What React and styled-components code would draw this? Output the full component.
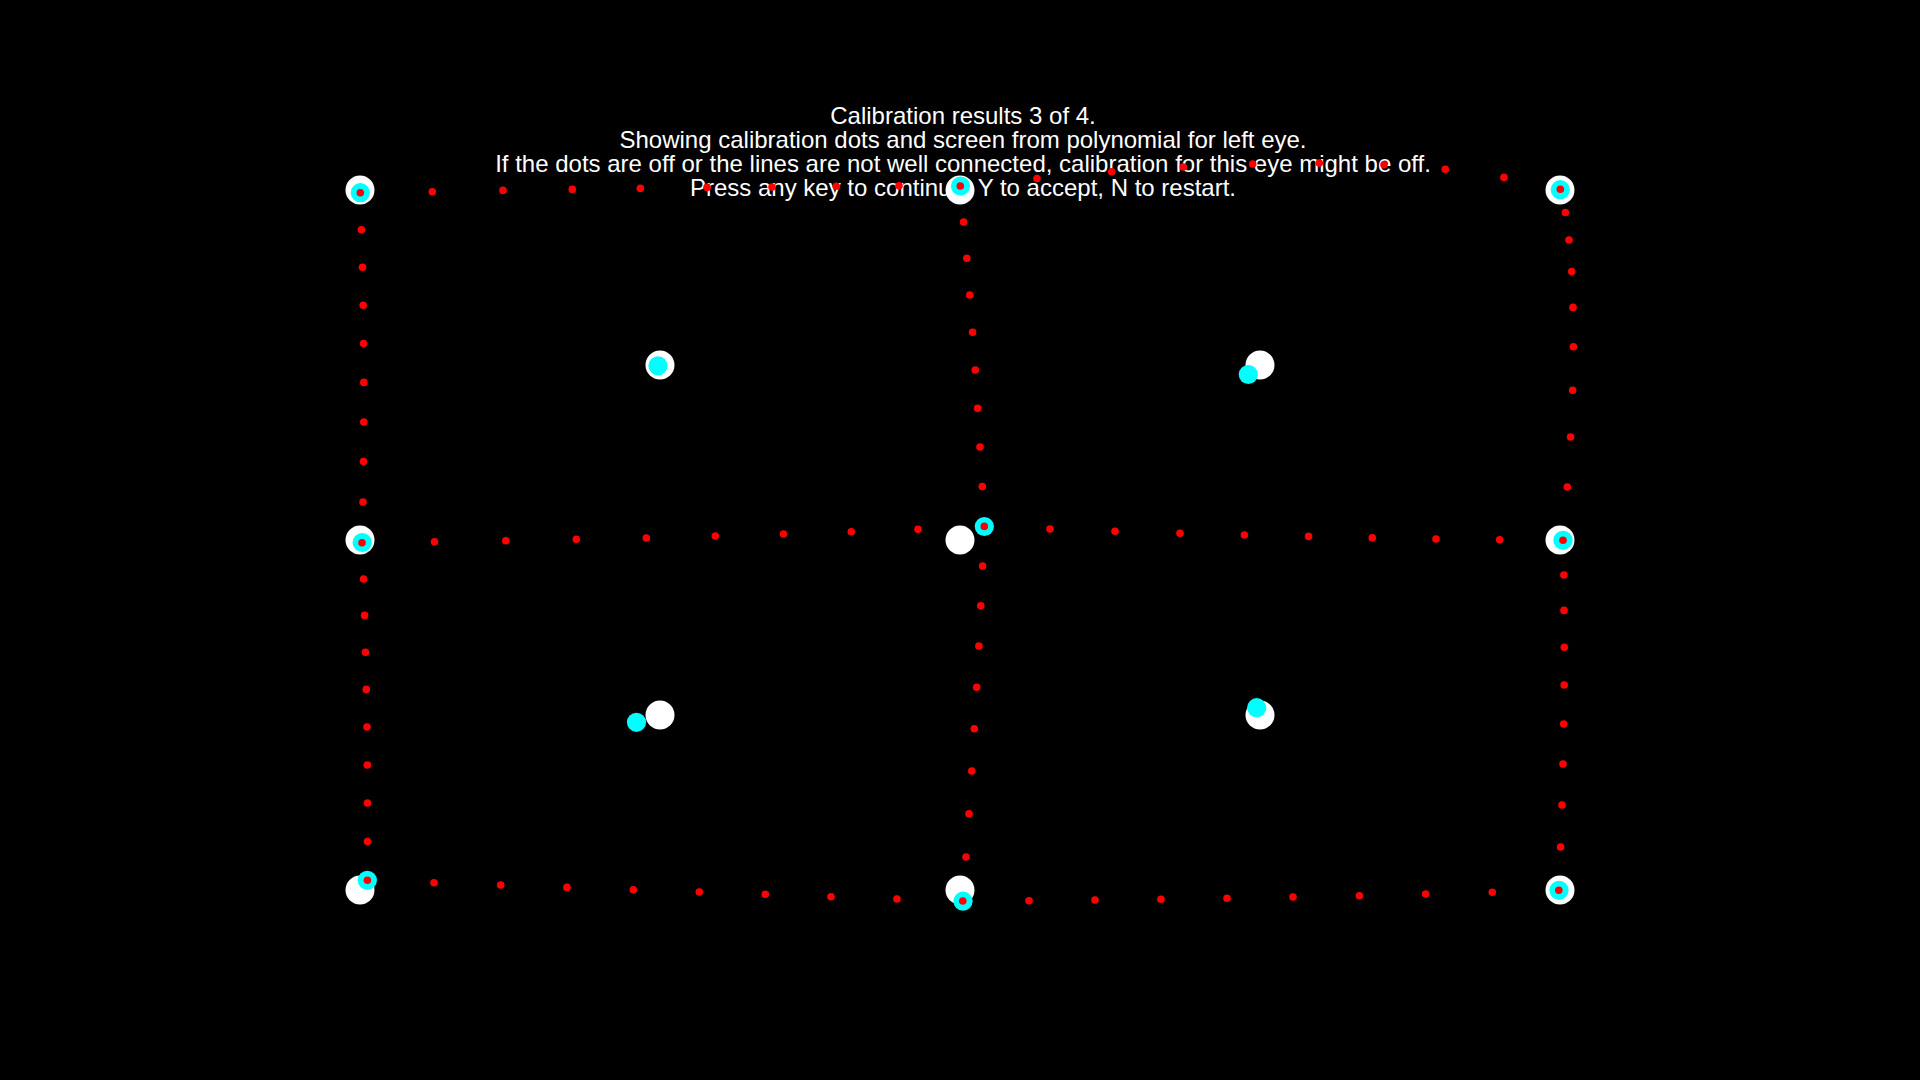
import React from "react";
import styled, { createGlobalStyle } from "styled-components";

const GlobalStyle = createGlobalStyle`
  body {
    margin: 0;
    background: #000;
  }
`;

const Screen = styled.main`
  display: grid;
  min-height: 100vh;
  background: #000;
  overflow: hidden;
`;

const Message = styled.div`
  grid-area: 1 / 1;
  padding: 104px 0 0 6px;
  color: #fff;
  font-family: "Liberation Sans", Arial, sans-serif;
  font-size: 24px;
  line-height: 24px;
  text-align: center;
`;

const Line = styled.p`
  margin: 0;
`;

const Plot = styled.svg`
  grid-area: 1 / 1;
  display: block;
  width: 100%;
  height: 100vh;
`;

const Target = styled.circle`
  fill: #fff;
`;

const Gaze = styled.circle`
  fill: #0ff;
`;

const Sample = styled.circle`
  fill: #f00;
`;

const lines = [
  "Calibration results 3 of 4.",
  "Showing calibration dots and screen from polynomial for left eye.",
  "If the dots are off or the lines are not well connected, calibration for this eye might be off.",
  "Press any key to continue, Y to accept, N to restart.",
];

const targets = [
  [360, 190], [960, 190], [1560, 190],
  [660, 365], [1260, 365],
  [360, 540], [960, 540], [1560, 540],
  [660, 715], [1260, 715],
  [360, 890], [960, 890], [1560, 890],
];

const gazes = [
  [360.3, 192.7], [960.5, 186], [1560.3, 189.7],
  [658, 365.8], [1248.3, 374.5],
  [362.2, 542.5], [984.3, 526.5], [1563, 540.3],
  [636.5, 722.3], [1256.7, 707.7],
  [367.3, 880.3], [963, 901.2], [1559, 890.3],
];

// Polynomial samples between neighbouring targets, one list per grid line.
const paths = {
  top: [
    [360.3, 192.7], [432.3, 191.7], [503, 190.4], [572.3, 189.4], [640.3, 188.4],
    [707, 187.4], [772, 187], [836.3, 186.3], [899, 185.8], [960.3, 186],
    [1037, 178.5], [1111.7, 171.7], [1183.3, 167], [1252.7, 164], [1319.3, 163],
    [1384, 164.8], [1445.3, 169.3], [1504, 177.4], [1560.3, 189.3],
  ],
  middle: [
    [362, 542.7], [434.5, 541.7], [505.8, 540.7], [576.3, 539.3], [646.3, 538],
    [715.3, 536], [783.5, 534], [851.3, 531.7], [918, 529.3], [984.3, 526.4],
    [1050, 529], [1115, 531.3], [1180, 533.3], [1244.4, 535], [1308.6, 536.4],
    [1372.3, 537.8], [1436, 539], [1499.7, 539.8], [1563, 540.3],
  ],
  bottom: [
    [367.4, 880.3], [434, 882.7], [500.7, 885], [567, 887.4], [633.3, 889.7],
    [699.3, 892], [765.3, 894.3], [831, 896.7], [897, 899], [962.8, 901],
    [1029, 900.7], [1095, 900], [1161, 899.3], [1227, 898.3], [1293, 897],
    [1359.4, 895.7], [1425.7, 894], [1492.3, 892.3], [1558.8, 890.3],
  ],
  left: [
    [361.4, 229.8], [362.5, 267.2], [363.2, 305.2], [363.6, 343.6], [363.8, 382.4],
    [363.8, 422], [363.5, 461.6], [363, 502],
    [363.6, 579], [364.6, 615.4], [365.5, 652.3], [366.3, 689.4], [367, 727],
    [367.3, 765], [367.5, 803], [367.5, 841.6],
  ],
  center: [
    [963.6, 222], [966.8, 258.3], [969.8, 295], [972.6, 332.2], [975.3, 370],
    [977.6, 408.2], [980, 447], [982.3, 486.6],
    [982.6, 566], [980.8, 605.8], [978.9, 646], [976.7, 687.3], [974.3, 728.8],
    [971.8, 771], [969, 813.8], [966, 857],
  ],
  right: [
    [1565.4, 212.5], [1569, 240], [1571.7, 271.6], [1573, 307.4], [1573.4, 346.8],
    [1572.7, 390.2], [1570.6, 437], [1567.3, 487],
    [1563.9, 575], [1564, 610.4], [1564.3, 647.3], [1564.2, 685], [1563.7, 724],
    [1563, 764], [1562, 805], [1560.6, 847],
  ],
};

const dots = (Dot, points, radius) =>
  points.map(([x, y]) => <Dot key={`${x}-${y}`} cx={x} cy={y} r={radius} />);

export default function App() {
  return (
    <>
      <GlobalStyle />
      <Screen>
        <Message>
          {lines.map((text) => (
            <Line key={text}>{text}</Line>
          ))}
        </Message>
        <Plot viewBox="0 0 1920 1080" aria-hidden="true">
          {dots(Target, targets, 14.5)}
          {dots(Gaze, gazes, 9.6)}
          {Object.entries(paths).map(([name, points]) => (
            <g key={name}>{dots(Sample, points, 3.8)}</g>
          ))}
        </Plot>
      </Screen>
    </>
  );
}
